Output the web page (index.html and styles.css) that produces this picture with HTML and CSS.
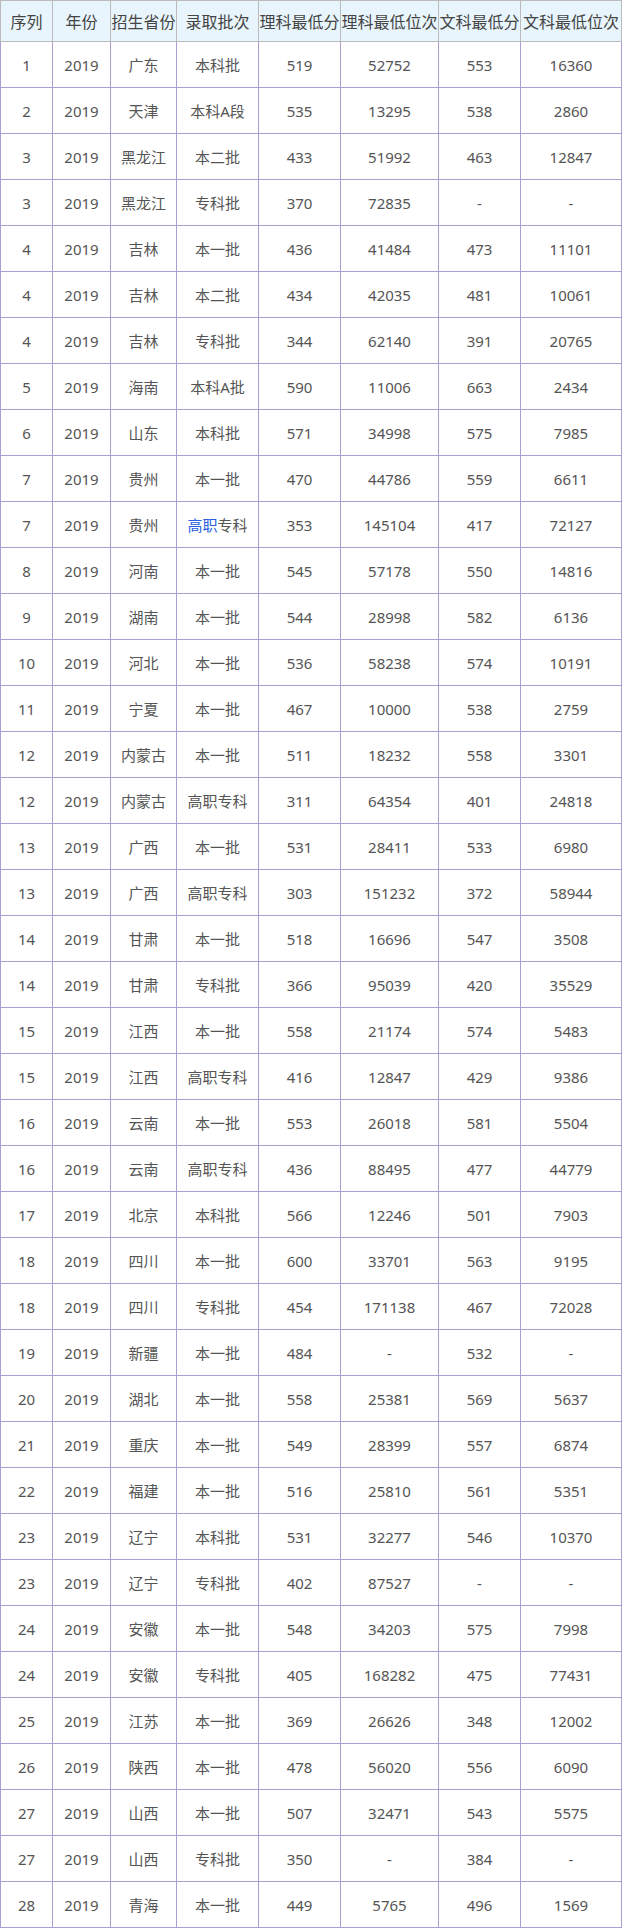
FILE: index.html
```html
<!DOCTYPE html>
<html lang="zh-CN">
<head>
<meta charset="utf-8">
<link rel="stylesheet" href="styles.css">
</head>
<body>
<table class="score-table">
<colgroup>
<col class="c1"><col class="c2"><col class="c3"><col class="c4"><col class="c5"><col class="c6"><col class="c7"><col class="c8">
</colgroup>
<thead>
<tr><th>序列</th><th>年份</th><th>招生省份</th><th>录取批次</th><th>理科最低分</th><th>理科最低位次</th><th>文科最低分</th><th>文科最低位次</th></tr>
</thead>
<tbody>
<tr><td>1</td><td>2019</td><td>广东</td><td>本科批</td><td>519</td><td>52752</td><td>553</td><td>16360</td></tr>
<tr><td>2</td><td>2019</td><td>天津</td><td>本科A段</td><td>535</td><td>13295</td><td>538</td><td>2860</td></tr>
<tr><td>3</td><td>2019</td><td>黑龙江</td><td>本二批</td><td>433</td><td>51992</td><td>463</td><td>12847</td></tr>
<tr><td>3</td><td>2019</td><td>黑龙江</td><td>专科批</td><td>370</td><td>72835</td><td>-</td><td>-</td></tr>
<tr><td>4</td><td>2019</td><td>吉林</td><td>本一批</td><td>436</td><td>41484</td><td>473</td><td>11101</td></tr>
<tr><td>4</td><td>2019</td><td>吉林</td><td>本二批</td><td>434</td><td>42035</td><td>481</td><td>10061</td></tr>
<tr><td>4</td><td>2019</td><td>吉林</td><td>专科批</td><td>344</td><td>62140</td><td>391</td><td>20765</td></tr>
<tr><td>5</td><td>2019</td><td>海南</td><td>本科A批</td><td>590</td><td>11006</td><td>663</td><td>2434</td></tr>
<tr><td>6</td><td>2019</td><td>山东</td><td>本科批</td><td>571</td><td>34998</td><td>575</td><td>7985</td></tr>
<tr><td>7</td><td>2019</td><td>贵州</td><td>本一批</td><td>470</td><td>44786</td><td>559</td><td>6611</td></tr>
<tr><td>7</td><td>2019</td><td>贵州</td><td><span class="link">高职</span>专科</td><td>353</td><td>145104</td><td>417</td><td>72127</td></tr>
<tr><td>8</td><td>2019</td><td>河南</td><td>本一批</td><td>545</td><td>57178</td><td>550</td><td>14816</td></tr>
<tr><td>9</td><td>2019</td><td>湖南</td><td>本一批</td><td>544</td><td>28998</td><td>582</td><td>6136</td></tr>
<tr><td>10</td><td>2019</td><td>河北</td><td>本一批</td><td>536</td><td>58238</td><td>574</td><td>10191</td></tr>
<tr><td>11</td><td>2019</td><td>宁夏</td><td>本一批</td><td>467</td><td>10000</td><td>538</td><td>2759</td></tr>
<tr><td>12</td><td>2019</td><td>内蒙古</td><td>本一批</td><td>511</td><td>18232</td><td>558</td><td>3301</td></tr>
<tr><td>12</td><td>2019</td><td>内蒙古</td><td>高职专科</td><td>311</td><td>64354</td><td>401</td><td>24818</td></tr>
<tr><td>13</td><td>2019</td><td>广西</td><td>本一批</td><td>531</td><td>28411</td><td>533</td><td>6980</td></tr>
<tr><td>13</td><td>2019</td><td>广西</td><td>高职专科</td><td>303</td><td>151232</td><td>372</td><td>58944</td></tr>
<tr><td>14</td><td>2019</td><td>甘肃</td><td>本一批</td><td>518</td><td>16696</td><td>547</td><td>3508</td></tr>
<tr><td>14</td><td>2019</td><td>甘肃</td><td>专科批</td><td>366</td><td>95039</td><td>420</td><td>35529</td></tr>
<tr><td>15</td><td>2019</td><td>江西</td><td>本一批</td><td>558</td><td>21174</td><td>574</td><td>5483</td></tr>
<tr><td>15</td><td>2019</td><td>江西</td><td>高职专科</td><td>416</td><td>12847</td><td>429</td><td>9386</td></tr>
<tr><td>16</td><td>2019</td><td>云南</td><td>本一批</td><td>553</td><td>26018</td><td>581</td><td>5504</td></tr>
<tr><td>16</td><td>2019</td><td>云南</td><td>高职专科</td><td>436</td><td>88495</td><td>477</td><td>44779</td></tr>
<tr><td>17</td><td>2019</td><td>北京</td><td>本科批</td><td>566</td><td>12246</td><td>501</td><td>7903</td></tr>
<tr><td>18</td><td>2019</td><td>四川</td><td>本一批</td><td>600</td><td>33701</td><td>563</td><td>9195</td></tr>
<tr><td>18</td><td>2019</td><td>四川</td><td>专科批</td><td>454</td><td>171138</td><td>467</td><td>72028</td></tr>
<tr><td>19</td><td>2019</td><td>新疆</td><td>本一批</td><td>484</td><td>-</td><td>532</td><td>-</td></tr>
<tr><td>20</td><td>2019</td><td>湖北</td><td>本一批</td><td>558</td><td>25381</td><td>569</td><td>5637</td></tr>
<tr><td>21</td><td>2019</td><td>重庆</td><td>本一批</td><td>549</td><td>28399</td><td>557</td><td>6874</td></tr>
<tr><td>22</td><td>2019</td><td>福建</td><td>本一批</td><td>516</td><td>25810</td><td>561</td><td>5351</td></tr>
<tr><td>23</td><td>2019</td><td>辽宁</td><td>本科批</td><td>531</td><td>32277</td><td>546</td><td>10370</td></tr>
<tr><td>23</td><td>2019</td><td>辽宁</td><td>专科批</td><td>402</td><td>87527</td><td>-</td><td>-</td></tr>
<tr><td>24</td><td>2019</td><td>安徽</td><td>本一批</td><td>548</td><td>34203</td><td>575</td><td>7998</td></tr>
<tr><td>24</td><td>2019</td><td>安徽</td><td>专科批</td><td>405</td><td>168282</td><td>475</td><td>77431</td></tr>
<tr><td>25</td><td>2019</td><td>江苏</td><td>本一批</td><td>369</td><td>26626</td><td>348</td><td>12002</td></tr>
<tr><td>26</td><td>2019</td><td>陕西</td><td>本一批</td><td>478</td><td>56020</td><td>556</td><td>6090</td></tr>
<tr><td>27</td><td>2019</td><td>山西</td><td>本一批</td><td>507</td><td>32471</td><td>543</td><td>5575</td></tr>
<tr><td>27</td><td>2019</td><td>山西</td><td>专科批</td><td>350</td><td>-</td><td>384</td><td>-</td></tr>
<tr><td>28</td><td>2019</td><td>青海</td><td>本一批</td><td>449</td><td>5765</td><td>496</td><td>1569</td></tr>
</tbody>
</table>
</body>
</html>
```
FILE: styles.css
```css
html, body {
  margin: 0;
  padding: 0;
  background: #ffffff;
}

.score-table {
  border-collapse: collapse;
  table-layout: fixed;
  width: 621px;
  font-family: "Noto Sans", "Noto Sans CJK SC", sans-serif;
  color: #555555;
}

.c1 { width: 52px; }
.c2 { width: 58px; }
.c3 { width: 66px; }
.c4 { width: 82px; }
.c5 { width: 82px; }
.c6 { width: 98px; }
.c7 { width: 82px; }
.c8 { width: 101px; }

.score-table th {
  background: #e8f5fc;
  border: 1px solid #bbbbbb;
  height: 40px;
  padding: 0;
  font-weight: normal;
  font-size: 16px;
  color: #444444;
  text-align: center;
  white-space: nowrap;
  overflow: hidden;
}

.score-table td {
  border: 1px solid #a99fd3;
  height: 45px;
  padding: 0;
  font-size: 15px;
  text-align: center;
  white-space: nowrap;
}

.score-table thead th {
  border-bottom-color: #bbbbbb;
}

.link {
  color: #2a5fe0;
}
```
